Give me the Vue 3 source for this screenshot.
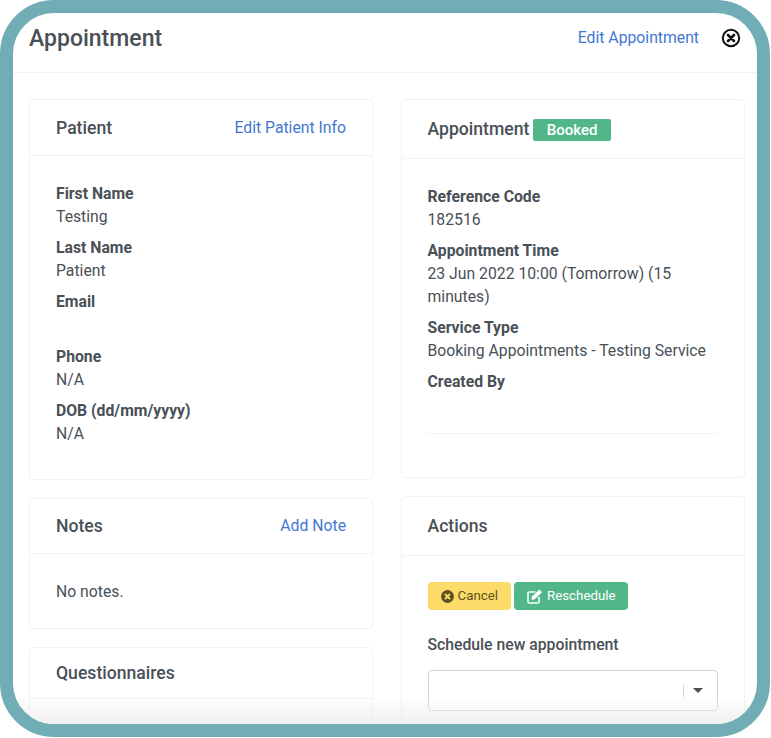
<script setup>
const patientFields = [
  { label: 'First Name', value: 'Testing' },
  { label: 'Last Name', value: 'Patient' },
  { label: 'Email', value: '' },
  { label: 'Phone', value: 'N/A' },
  { label: 'DOB (dd/mm/yyyy)', value: 'N/A' },
]

const appointmentFields = [
  { label: 'Reference Code', value: '182516' },
  { label: 'Appointment Time', value: '23 Jun 2022 10:00 (Tomorrow) (15 minutes)' },
  { label: 'Service Type', value: 'Booking Appointments - Testing Service' },
  { label: 'Created By', value: '' },
]
</script>

<template>
  <div class="frame">
    <div class="modal">
      <header class="modal-header">
        <h1>Appointment</h1>
        <a class="link edit-link">Edit Appointment</a>
        <svg class="close" width="20" height="20" viewBox="0 0 20 20">
          <circle cx="10" cy="10" r="8.2" fill="none" stroke="#111" stroke-width="2" />
          <path d="M7 7l6 6M13 7l-6 6" stroke="#111" stroke-width="2.6" stroke-linecap="round" />
        </svg>
      </header>

      <div class="modal-body">
        <div class="column">
          <section class="card patient-card">
            <div class="card-header patient-header">
              <h2>Patient</h2>
              <a class="link">Edit Patient Info</a>
            </div>
            <div class="card-body">
              <div v-for="field in patientFields" :key="field.label" class="field">
                <div class="field-label">{{ field.label }}</div>
                <div class="field-value">{{ field.value }}</div>
              </div>
            </div>
          </section>

          <section class="card">
            <div class="card-header notes-header">
              <h2>Notes</h2>
              <a class="link notes-link">Add Note</a>
            </div>
            <div class="notes-body">No notes.</div>
          </section>

          <section class="card questionnaires">
            <div class="card-header questionnaires-header">
              <h2>Questionnaires</h2>
            </div>
          </section>
        </div>

        <div class="column">
          <section class="card appointment-card">
            <div class="card-header appointment-header">
              <h2>Appointment</h2>
              <span class="badge">Booked</span>
            </div>
            <div class="card-body">
              <div v-for="field in appointmentFields" :key="field.label" class="field">
                <div class="field-label">{{ field.label }}</div>
                <div class="field-value">{{ field.value }}</div>
              </div>
              <div class="divider"></div>
            </div>
          </section>

          <section class="card actions">
            <div class="card-header actions-header">
              <h2>Actions</h2>
            </div>
            <div class="actions-body">
              <div class="buttons">
                <button class="btn btn-cancel">
                  <svg width="13" height="13" viewBox="0 0 13 13">
                    <circle cx="6.5" cy="6.5" r="6.5" fill="#5f5220" />
                    <path d="M4.5 4.5l4 4M8.5 4.5l-4 4" stroke="#fcdb69" stroke-width="1.8" stroke-linecap="round" />
                  </svg>
                  Cancel
                </button>
                <button class="btn btn-reschedule">
                  <svg width="16" height="15" viewBox="0 0 16 15">
                    <path d="M12 8v4.6a1.4 1.4 0 0 1-1.4 1.4H2.4A1.4 1.4 0 0 1 1 12.6V4.4A1.4 1.4 0 0 1 2.4 3h6" fill="none" stroke="#fff" stroke-width="1.6" />
                    <path d="M5 7.6L12.4.6l2.6 2.6-7.2 7L4.6 11z" fill="#fff" />
                  </svg>
                  Reschedule
                </button>
              </div>
              <div class="select-label">Schedule new appointment</div>
              <div class="select">
                <span class="select-sep"></span>
                <span class="select-arrow"></span>
              </div>
            </div>
          </section>
        </div>
      </div>
      <div class="fade"></div>
    </div>
  </div>
</template>

<style scoped>
.frame {
  width: 770px;
  height: 737px;
  box-sizing: border-box;
  border: 13px solid #71adb5;
  border-radius: 54px;
  overflow: hidden;
  background: #fff;
  font-family: Roboto, "Liberation Sans", sans-serif;
  color: #495057;
}

.modal {
  position: relative;
  height: 100%;
  overflow: hidden;
}

.modal-header {
  display: flex;
  align-items: center;
  height: 60px;
  box-sizing: border-box;
  padding: 0 16px;
  border-bottom: 1px solid #eff2f7;
}

h1 {
  flex: 1;
  margin: 0 0 8px;
  font-size: 23px;
  font-weight: 500;
  line-height: 32px;
}

.edit-link {
  margin: 0 22px 10px 0;
}

.close {
  margin-bottom: 10px;
}

.link {
  font-size: 15.75px;
  color: #3f78d0;
}

.notes-link {
  margin-bottom: 2px;
}

.modal-body {
  display: grid;
  grid-template-columns: 344px 344px;
  column-gap: 27.5px;
  padding: 26px 16px 0;
}

.column {
  display: flex;
  flex-direction: column;
  gap: 18px;
}

.card {
  box-sizing: border-box;
  border: 1px solid #eff2f7;
  border-radius: 4px;
  background: #fff;
}

.patient-card {
  height: 381px;
}

.appointment-card {
  height: 379px;
}

.questionnaires {
  height: 120px;
}

.actions {
  height: 300px;
}

.card-header {
  display: flex;
  align-items: center;
  padding: 0 26px;
  border-bottom: 1px solid #eff2f7;
}

.patient-header {
  justify-content: space-between;
  height: 55px;
}

.notes-header {
  justify-content: space-between;
  height: 54px;
}

.questionnaires-header {
  height: 50px;
}

.appointment-header {
  gap: 4px;
  height: 58px;
}

.actions-header {
  height: 58px;
}

h2 {
  margin: 0;
  font-size: 17.6px;
  font-weight: 500;
  line-height: 24px;
}

.badge {
  margin-top: 2px;
  padding: 0 13.5px;
  border-radius: 2px;
  background: #52b788;
  color: #fff;
  font-size: 15px;
  font-weight: 500;
  line-height: 22px;
}

.card-body {
  padding: 26px 26px 0;
}

.field {
  margin-bottom: 8px;
  font-size: 15.75px;
  line-height: 23px;
}

.field-label {
  font-weight: 700;
}

.field-value {
  min-height: 24px;
}

.field-value:not(:empty) {
  min-height: 23px;
}

.divider {
  margin-top: 16px;
  border-top: 1px solid #eff2f7;
}

.notes-body {
  height: 74px;
  padding: 26px 26px 0;
  box-sizing: border-box;
  font-size: 15.75px;
  line-height: 23px;
}

.actions-body {
  padding: 26px 26px 0;
}

.buttons {
  display: flex;
  gap: 3px;
}

.btn {
  display: flex;
  align-items: center;
  gap: 4px;
  height: 28px;
  padding: 0 13px 2px;
  border: 0;
  border-radius: 4px;
  font-family: inherit;
  font-size: 13.3px;
}

.btn svg {
  margin-top: 2px;
}

.btn-cancel {
  background: #fcdb69;
  color: #5f5220;
}

.btn-reschedule {
  padding-right: 12px;
  background: #52b788;
  color: #fff;
}

.select-label {
  margin-top: 23px;
  font-size: 15.75px;
  font-weight: 500;
  line-height: 24px;
}

.select {
  display: flex;
  align-items: center;
  justify-content: flex-end;
  box-sizing: border-box;
  height: 41px;
  margin-top: 13px;
  border: 1px solid #ced4da;
  border-radius: 4px;
  padding-right: 14px;
}

.select-sep {
  width: 1px;
  height: 12px;
  margin-right: 9px;
  background: #ced4da;
}

.select-arrow {
  border-top: 5px solid #495057;
  border-left: 5px solid transparent;
  border-right: 5px solid transparent;
}

.fade {
  position: absolute;
  left: 0;
  right: 0;
  bottom: 0;
  height: 28px;
  background: linear-gradient(to bottom, rgba(235, 235, 235, 0), rgba(235, 235, 235, 0.75));
  pointer-events: none;
}
</style>

<style>
html,
body {
  background: #fff;
}
</style>
